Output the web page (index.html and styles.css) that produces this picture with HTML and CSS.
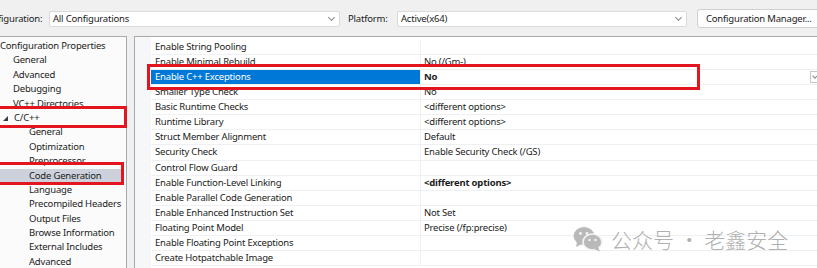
FILE: index.html
```html
<!DOCTYPE html>
<html lang="en">
<head>
  <meta charset="UTF-8" />
  <title>Property Pages - C/C++ Code Generation</title>
  <link rel="stylesheet" href="styles.css">
</head>
<body>
  <!-- Configuration / platform bar -->
  <div class="toolbar">
    <span class="label label-config">Configuration:</span>
    <div class="combo combo-config">
      <span>All Configurations</span>
      <span class="chevron"></span>
    </div>
    <span class="label label-platform">Platform:</span>
    <div class="combo combo-platform">
      <span>Active(x64)</span>
      <span class="chevron"></span>
    </div>
    <div class="btn">Configuration Manager...</div>
  </div>

  <div class="main">
    <!-- Left property tree -->
    <div class="tree">
      <div class="node lvl0">Configuration Properties</div>
      <div class="node lvl1">General</div>
      <div class="node lvl1">Advanced</div>
      <div class="node lvl1">Debugging</div>
      <div class="node lvl1">VC++ Directories</div>
      <div class="node lvl1 open"><span class="arrow"></span>C/C++</div>
      <div class="node lvl2">General</div>
      <div class="node lvl2">Optimization</div>
      <div class="node lvl2">Preprocessor</div>
      <div class="node lvl2 current">Code Generation</div>
      <div class="node lvl2">Language</div>
      <div class="node lvl2">Precompiled Headers</div>
      <div class="node lvl2">Output Files</div>
      <div class="node lvl2">Browse Information</div>
      <div class="node lvl2">External Includes</div>
      <div class="node lvl2">Advanced</div>
    </div>

    <!-- Property grid -->
    <div class="grid">
      <div class="gutter"></div>
      <div class="rows">
        <div class="row"><div class="name">Enable String Pooling</div><div class="value"></div></div>
        <div class="row"><div class="name">Enable Minimal Rebuild</div><div class="value">No (/Gm-)</div></div>
        <div class="row selected"><div class="name">Enable C++ Exceptions</div><div class="value bold">No<span class="drop"></span></div></div>
        <div class="row"><div class="name">Smaller Type Check</div><div class="value">No</div></div>
        <div class="row"><div class="name">Basic Runtime Checks</div><div class="value">&lt;different options&gt;</div></div>
        <div class="row"><div class="name">Runtime Library</div><div class="value">&lt;different options&gt;</div></div>
        <div class="row"><div class="name">Struct Member Alignment</div><div class="value">Default</div></div>
        <div class="row"><div class="name">Security Check</div><div class="value">Enable Security Check (/GS)</div></div>
        <div class="row"><div class="name">Control Flow Guard</div><div class="value"></div></div>
        <div class="row"><div class="name">Enable Function-Level Linking</div><div class="value bold">&lt;different options&gt;</div></div>
        <div class="row"><div class="name">Enable Parallel Code Generation</div><div class="value"></div></div>
        <div class="row"><div class="name">Enable Enhanced Instruction Set</div><div class="value">Not Set</div></div>
        <div class="row"><div class="name">Floating Point Model</div><div class="value">Precise (/fp:precise)</div></div>
        <div class="row"><div class="name">Enable Floating Point Exceptions</div><div class="value"></div></div>
        <div class="row"><div class="name">Create Hotpatchable Image</div><div class="value"></div></div>
      </div>
    </div>
  </div>

  <!-- red annotation boxes -->
  <div class="mark mark-cpp"></div>
  <div class="mark mark-codegen"></div>
  <div class="mark mark-exceptions"></div>

  <!-- watermark -->
  <div class="watermark">
    <svg class="wx" width="30" height="26" viewBox="0 0 30 26">
      <ellipse cx="11" cy="10" rx="10.5" ry="9" fill="#b9b9b9"/>
      <path d="M4 16 L3 21 L9 18 Z" fill="#b9b9b9"/>
      <ellipse cx="19.5" cy="16" rx="9.5" ry="8" fill="#b9b9b9" stroke="#f4f4f4" stroke-width="1.6"/>
      <path d="M25 21 L27 25.5 L21 23 Z" fill="#b9b9b9"/>
      <circle cx="7.5" cy="7.5" r="1.4" fill="#f4f4f4"/>
      <circle cx="14" cy="7.5" r="1.4" fill="#f4f4f4"/>
      <circle cx="16.5" cy="14" r="1.2" fill="#f4f4f4"/>
      <circle cx="22.5" cy="14" r="1.2" fill="#f4f4f4"/>
    </svg>
    <span>公众号 · 老鑫安全</span>
  </div>
</body>
</html>
```

FILE: styles.css
```css
/* Property pages dialog */
body { margin: 0; width: 817px; height: 268px; overflow: hidden; background: #f0f0f0; color: #1b1b1b; font-family: "Noto Sans", "Open Sans", sans-serif; font-size: 9.5px; letter-spacing: -0.2px; position: relative; }

.toolbar { height: 36px; display: flex; align-items: center; }
.toolbar > * { flex-shrink: 0; }
.label { white-space: nowrap; }
.label-config { margin-left: -19px; width: 68px; }
.label-platform { margin-left: 8px; width: 49px; }
.combo { height: 16px; box-sizing: border-box; background: #fff; border: 1px solid #dadada; border-radius: 2px; display: flex; align-items: center; justify-content: space-between; padding: 0 5px 0 3px; margin-top: 1px; }
.combo-config { width: 291px; }
.combo-platform { width: 290px; }
.chevron { width: 4px; height: 4px; border-right: 1px solid #8a8a8a; border-bottom: 1px solid #8a8a8a; transform: rotate(45deg); margin-top: -3px; }
.btn { margin-left: 10px; height: 19px; box-sizing: border-box; border: 1px solid #d0d0d0; border-radius: 3px; background: #fdfdfd; padding: 0 8px; display: flex; align-items: center; white-space: nowrap; margin-top: 1px; }

.main { display: flex; gap: 7px; height: 232px; }
.tree { width: 126px; flex-shrink: 0; background: #fbfbfb; border-top: 1px solid #a9a9a9; border-right: 1px solid #a9a9a9; padding-top: 2px; }
.node { height: 14.4px; line-height: 14.4px; white-space: nowrap; }
.lvl0 { padding-left: 0; }
.lvl1 { padding-left: 13px; }
.lvl2 { padding-left: 29px; }
.open { padding-left: 3px; }
.arrow { display: inline-block; width: 0; height: 0; border-left: 5px solid transparent; border-bottom: 5px solid #3a3a3a; margin-right: 6px; vertical-align: 0; }
.current { background: #cdd1db; margin-right: 5px; }

.grid { flex: 1; display: flex; background: #fff; border-top: 1px solid #a9a9a9; border-left: 1px solid #a9a9a9; }
.gutter { width: 16px; background: #f6f7f9; }
.rows { flex: 1; padding-top: 2.5px; }
.row { display: flex; height: 15.14px; box-sizing: border-box; border-bottom: 1px solid #eef0f4; }
.name { width: 270px; box-sizing: border-box; padding-left: 4px; line-height: 14.5px; white-space: nowrap; border-right: 1px solid #eef0f4; }
.value { flex: 1; padding-left: 3px; line-height: 14.5px; white-space: nowrap; position: relative; }
.bold { font-weight: bold; }
.selected .name { background: #0078d7; color: #fff; }
.drop { position: absolute; right: -2px; top: 1px; width: 9px; height: 12px; box-sizing: border-box; border: 1px solid #c8c8c8; background: #fff; }
.drop::after { content: ""; position: absolute; left: 2px; top: 2px; width: 3px; height: 3px; border-right: 1px solid #888; border-bottom: 1px solid #888; transform: rotate(45deg); }

/* red highlight annotations */
.mark { position: absolute; border: 3px solid #e3151f; box-sizing: border-box; }
.mark-cpp { left: -4px; top: 106px; width: 131px; height: 22px; }
.mark-codegen { left: -4px; top: 162px; width: 128px; height: 23px; }
.mark-exceptions { left: 147px; top: 64px; width: 553px; height: 26px; }

.watermark { position: absolute; left: 573px; top: 224px; display: flex; align-items: center; gap: 8px; color: #b0b0b0; font-family: "Noto Sans CJK SC", sans-serif; font-size: 21px; font-weight: 300; letter-spacing: 0; white-space: nowrap; }
```
